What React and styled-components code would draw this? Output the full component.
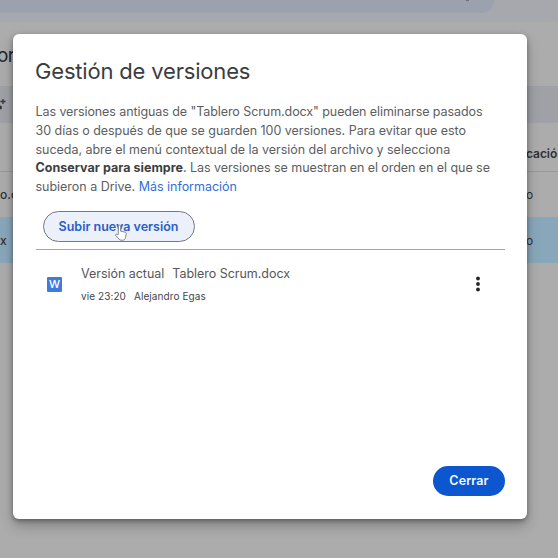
import React from "react";
import styled, { createGlobalStyle } from "styled-components";

const Global = createGlobalStyle`
  * { box-sizing: border-box; }
  body { margin: 0; overflow: hidden; font-family: Inter, "Open Sans", sans-serif; }
`;

const Screen = styled.div`
  position: relative;
  width: 558px;
  height: 558px;
  overflow: hidden;
  background: #acacac;
`;

const Header = styled.div`
  height: 22px;
  background: #a6a8ae;
`;

const SearchBar = styled.div`
  width: 494px;
  height: 13px;
  padding-left: 466px;
  background: #9ba1ae;
  border-radius: 0 0 22px 0;

  &::before {
    content: "";
    display: block;
    width: 3px;
    height: 1px;
    background: #6d717a;
  }
`;

const Heading = styled.div`
  height: 64px;
  padding-top: 22px;
  font-size: 19px;
  line-height: 24px;
  letter-spacing: -0.6px;
  color: #242527;
  text-indent: -3px;
`;

const Toolbar = styled.div`
  display: flex;
  align-items: center;
  height: 37px;
  background: #9fa1a7;
`;

const Row = styled.div`
  display: flex;
  align-items: center;
  justify-content: space-between;
  height: ${(p) => p.$height}px;
  padding-top: ${(p) => p.$top || 0}px;
  background: ${(p) => (p.$selected ? "#89a7bb" : "transparent")};
  border-bottom: ${(p) => (p.$line ? "1px solid #989999" : "0")};
  font-size: 12px;
  font-weight: 500;
  color: #303133;
`;

const EndCell = styled.span`
  width: 32px;
  font-weight: ${(p) => (p.$strong ? 600 : 400)};
  letter-spacing: ${(p) => (p.$strong ? -0.05 : 0)}px;
  white-space: nowrap;
`;

const Dialog = styled.section`
  position: absolute;
  left: 13px;
  top: 34px;
  width: 514px;
  height: 485px;
  display: flex;
  flex-direction: column;
  padding: 22px 22px 23px 23px;
  border-radius: 6px;
  background: #fff;
  box-shadow: 0 7px 14px rgba(0, 0, 0, 0.22), 0 2px 5px rgba(0, 0, 0, 0.35);
`;

const Title = styled.h1`
  margin: 0 0 0 -1px;
  font-size: 22px;
  line-height: 30px;
  font-weight: 400;
  letter-spacing: -0.18px;
  color: #3c3d40;
  white-space: nowrap;
`;

const Description = styled.div`
  margin: 17px 0 0 -0.5px;
  height: 94px;
  font-size: 12.5px;
  line-height: 18.8px;
  color: #5c5e61;
`;

const Line = styled.div`
  white-space: nowrap;
  letter-spacing: ${(p) => p.$spacing || 0}px;
`;

const Strong = styled.b`
  font-weight: 700;
  color: #3d3e40;
  letter-spacing: 0.03px;
`;

const Link = styled.a`
  color: #2f6fdb;
`;

const UploadButton = styled.button`
  position: relative;
  align-self: flex-start;
  width: 152px;
  height: 31px;
  margin: 14px 0 0 7px;
  padding: 0;
  border: 1px solid #737780;
  border-radius: 16px;
  background: #ebf0fa;
  color: #2a5dc7;
  font: 600 12.5px/29px Inter, sans-serif;
  letter-spacing: 0;
  text-indent: -1px;
  white-space: nowrap;
`;

const Pointer = styled.svg`
  position: absolute;
  left: 70px;
  top: 12px;
`;

const Divider = styled.div`
  height: 1px;
  margin-top: 7px;
  background: #a6a6a6;
  flex-shrink: 0;
`;

const Version = styled.div`
  display: flex;
  align-items: center;
  height: 68px;
  padding: 0 22px 0 11px;
`;

const FileIcon = styled.div`
  width: 15px;
  height: 15px;
  border-radius: 1px;
  background: #3f7bdd;
  color: #fff;
  font: 500 11px/15px Inter, sans-serif;
  text-align: center;
`;

const Details = styled.div`
  flex: 1;
  padding-left: 19px;
`;

const Name = styled.div`
  display: flex;
  gap: 8px;
  font-size: 12.5px;
  line-height: 23px;
  letter-spacing: -0.03px;
  color: #55575a;
`;

const Meta = styled.div`
  display: flex;
  gap: 8px;
  font-size: 10px;
  line-height: 22px;
  letter-spacing: 0.08px;
  color: #444649;
`;

const CloseButton = styled.button`
  width: 72px;
  height: 30px;
  margin: auto 0 0 auto;
  padding: 0;
  border: 0;
  border-radius: 15px;
  background: #0c56cf;
  color: #f4f8ff;
  font: 600 12.5px/30px Inter, sans-serif;
  letter-spacing: 0.1px;
`;

export default function App() {
  return (
    <Screen>
      <Global />
      <Header><SearchBar /></Header>
      <Heading>or</Heading>
      <Toolbar>
        <svg width="8" height="20" viewBox="0 0 8 20">
          <path d="M3 4v5M.5 6.500h5" stroke="#343538" strokeWidth="1.3" />
          <circle cx="0" cy="12.500" r="2" fill="#343538" />
        </svg>
      </Toolbar>
      <Row $height={49} $top={13} $line><span /><EndCell $strong>cació</EndCell></Row>
      <Row $height={45}><span>o.c</span><EndCell>o</EndCell></Row>
      <Row $height={46} $selected><span>x</span><EndCell>o</EndCell></Row>

      <Dialog>
        <Title>Gestión de versiones</Title>
        <Description>
          <Line $spacing={-0.08}>Las versiones antiguas de "Tablero Scrum.docx" pueden eliminarse pasados</Line>
          <Line $spacing={-0.03}>30 días o después de que se guarden 100 versiones. Para evitar que esto</Line>
          <Line $spacing={-0.03}>suceda, abre el menú contextual de la versión del archivo y selecciona</Line>
          <Line $spacing={-0.06}><Strong>Conservar para siempre</Strong>. Las versiones se muestran en el orden en el que se</Line>
          <Line $spacing={-0.02}>subieron a Drive. <Link>Más información</Link></Line>
        </Description>
        <UploadButton>
          Subir nueva versión
          <Pointer width="14" height="18" viewBox="0 0 14 18">
            <path d="M4.300 10.500V2.200a1.200 1.200 0 0 1 2.400 0v5l4.200.9c1 .3 1.500.9 1.300 1.900l-.7 3.700c-.3 1.500-1.200 2.500-2.700 2.500H7.200c-.9 0-1.500-.4-2.100-1.100L1.300 11c.7-1 1.600-.9 2.300-.5z" fill="#fff" stroke="#626875" strokeWidth=".8" />
          </Pointer>
        </UploadButton>
        <Divider />
        <Version>
          <FileIcon>W</FileIcon>
          <Details>
            <Name><span>Versión actual</span><span>Tablero Scrum.docx</span></Name>
            <Meta><span>vie 23:20</span><span>Alejandro Egas</span></Meta>
          </Details>
          <svg width="10" height="18" viewBox="0 0 10 18" fill="#252525">
            <circle cx="5" cy="3.500" r="1.900" /><circle cx="5" cy="9" r="1.900" /><circle cx="5" cy="14.500" r="1.900" />
          </svg>
        </Version>
        <CloseButton>Cerrar</CloseButton>
      </Dialog>
    </Screen>
  );
}
